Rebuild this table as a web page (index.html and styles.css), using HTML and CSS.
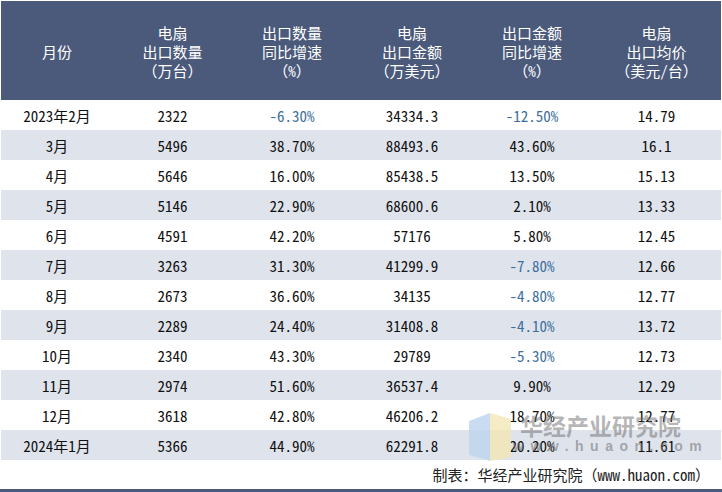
FILE: index.html
```html
<!DOCTYPE html>
<html lang="zh">
<head>
<meta charset="utf-8">
<link rel="stylesheet" href="styles.css">
</head>
<body>
<div class="page">
  <div class="grid">
    <div class="hd">月份</div>
    <div class="hd">电扇<br>出口数量<br>（万台）</div>
    <div class="hd">出口数量<br>同比增速<br>（%）</div>
    <div class="hd">电扇<br>出口金额<br>（万美元）</div>
    <div class="hd">出口金额<br>同比增速<br>（%）</div>
    <div class="hd">电扇<br>出口均价<br>（美元/台）</div>

    <div class="c">2023年2月</div><div class="c">2322</div><div class="c neg">-6.30%</div><div class="c">34334.3</div><div class="c neg">-12.50%</div><div class="c">14.79</div>
    <div class="c alt">3月</div><div class="c alt">5496</div><div class="c alt">38.70%</div><div class="c alt">88493.6</div><div class="c alt">43.60%</div><div class="c alt">16.1</div>
    <div class="c">4月</div><div class="c">5646</div><div class="c">16.00%</div><div class="c">85438.5</div><div class="c">13.50%</div><div class="c">15.13</div>
    <div class="c alt">5月</div><div class="c alt">5146</div><div class="c alt">22.90%</div><div class="c alt">68600.6</div><div class="c alt">2.10%</div><div class="c alt">13.33</div>
    <div class="c">6月</div><div class="c">4591</div><div class="c">42.20%</div><div class="c">57176</div><div class="c">5.80%</div><div class="c">12.45</div>
    <div class="c alt">7月</div><div class="c alt">3263</div><div class="c alt">31.30%</div><div class="c alt">41299.9</div><div class="c alt neg">-7.80%</div><div class="c alt">12.66</div>
    <div class="c">8月</div><div class="c">2673</div><div class="c">36.60%</div><div class="c">34135</div><div class="c neg">-4.80%</div><div class="c">12.77</div>
    <div class="c alt">9月</div><div class="c alt">2289</div><div class="c alt">24.40%</div><div class="c alt">31408.8</div><div class="c alt neg">-4.10%</div><div class="c alt">13.72</div>
    <div class="c">10月</div><div class="c">2340</div><div class="c">43.30%</div><div class="c">29789</div><div class="c neg">-5.30%</div><div class="c">12.73</div>
    <div class="c alt">11月</div><div class="c alt">2974</div><div class="c alt">51.60%</div><div class="c alt">36537.4</div><div class="c alt">9.90%</div><div class="c alt">12.29</div>
    <div class="c">12月</div><div class="c">3618</div><div class="c">42.80%</div><div class="c">46206.2</div><div class="c">18.70%</div><div class="c">12.77</div>
    <div class="c alt">2024年1月</div><div class="c alt">5366</div><div class="c alt">44.90%</div><div class="c alt">62291.8</div><div class="c alt">20.20%</div><div class="c alt">11.61</div>
  </div>
  <div class="footer">制表：华经产业研究院（www.huaon.com）</div>
  <div class="bar"></div>

  <div class="watermark">
    <svg class="wm-logo" width="42" height="48" viewBox="0 0 42 48">
      <polygon points="0,8 21,0 21,48 0,42" fill="#bcd3ee" opacity="0.8"/>
      <polygon points="21,0 42,6 42,44 21,48" fill="#f3e6b5" opacity="0.8"/>
    </svg>
    <div class="wm-text">
      <div class="wm-cn">华经产业研究院</div>
      <div class="wm-en">www.huaon.com</div>
    </div>
  </div>
</div>
</body>
</html>
```

FILE: styles.css
```css
html, body {
  margin: 0;
  padding: 0;
  background: #ffffff;
}

.page {
  position: relative;
  width: 722px;
  height: 492px;
  padding-top: 1px;
  box-sizing: border-box;
  font-family: "Noto Sans Mono CJK SC", "Noto Sans CJK SC", sans-serif;
  font-size: 15px;
  color: #111111;
  overflow: hidden;
}

.grid {
  margin-left: 1px;
  width: 720px;
  display: grid;
  grid-template-columns: 112px 119px 120px 120px 120px 129px;
  grid-template-rows: 99px repeat(12, 30px);
}

.hd {
  background: #4b5a7b;
  color: #ffffff;
  display: flex;
  align-items: center;
  justify-content: center;
  text-align: center;
  line-height: 19px;
  padding-top: 2px;
  box-sizing: border-box;
}

.c {
  display: flex;
  align-items: center;
  justify-content: center;
  white-space: nowrap;
  background: #ffffff;
}

.c.alt {
  background: #dfe3ec;
}

.c.neg {
  color: #3d6f9c;
}

.footer {
  height: 29px;
  display: flex;
  align-items: center;
  justify-content: flex-end;
  padding-right: 12px;
  color: #222222;
  font-size: 15px;
}

.bar {
  height: 3px;
  background: #4b5a7b;
}

.watermark {
  position: absolute;
  left: 469px;
  top: 413px;
  width: 250px;
  display: flex;
  align-items: flex-start;
  gap: 9px;
  pointer-events: none;
}

.wm-logo {
  flex: none;
}

.wm-text {
  flex: none;
  display: flex;
  flex-direction: column;
  align-items: flex-start;
}

.wm-cn {
  font-family: "Noto Sans CJK SC", sans-serif;
  font-size: 23px;
  font-weight: bold;
  color: rgba(110, 110, 110, 0.5);
  line-height: 25px;
}

.wm-en {
  font-family: "Liberation Sans", sans-serif;
  font-size: 14px;
  font-weight: bold;
  color: rgba(110, 110, 110, 0.55);
  letter-spacing: 6.5px;
  line-height: 14px;
  white-space: nowrap;
  margin-top: 1px;
  margin-left: -7px;
}
```
